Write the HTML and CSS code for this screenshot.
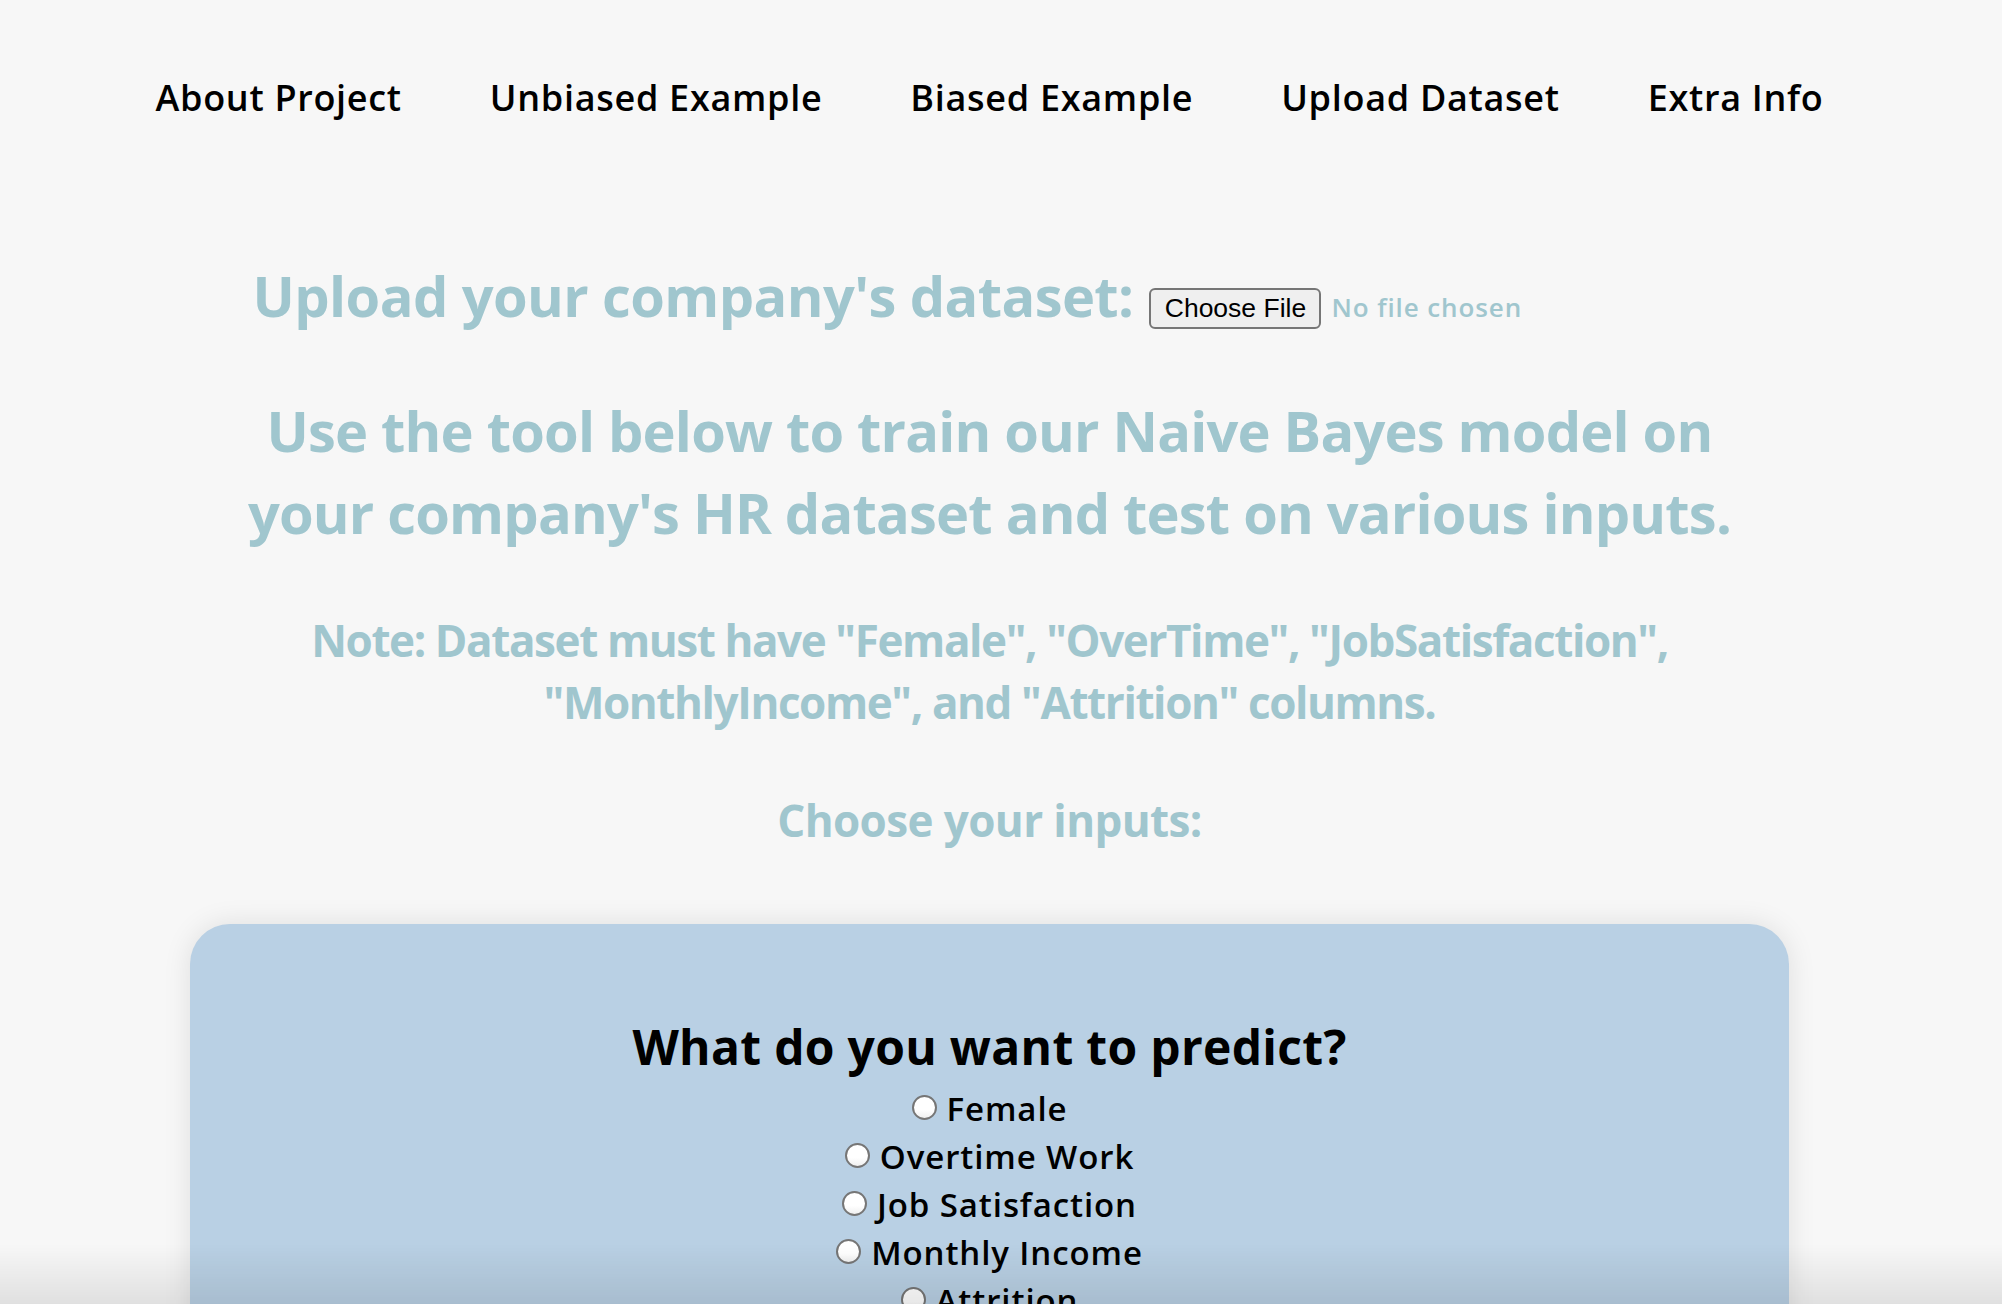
FILE: index.html
```html
<!DOCTYPE html>
<html lang="en">
<head>
<meta charset="utf-8">
<title>Upload Dataset</title>
<link rel="stylesheet" href="styles.css">
</head>
<body>
<div class="page">
  <nav class="nav">
    <a class="nav-link" href="#">About Project</a>
    <a class="nav-link" href="#">Unbiased Example</a>
    <a class="nav-link" href="#">Biased Example</a>
    <a class="nav-link" href="#">Upload Dataset</a>
    <a class="nav-link" href="#">Extra Info</a>
  </nav>

  <div class="upload-row">
    <h1 class="upload-title">Upload your company's dataset:</h1>
    <div class="file-input">
      <button class="file-btn" type="button">Choose File</button>
      <span class="file-name">No file chosen</span>
    </div>
  </div>

  <h2 class="intro">Use the tool below to train our Naive Bayes model on<br>your company's HR dataset and test on various inputs.</h2>

  <h3 class="note">Note: Dataset must have "Female", "OverTime", "JobSatisfaction",<br>"MonthlyIncome", and "Attrition" columns.</h3>

  <h3 class="choose">Choose your inputs:</h3>

  <section class="panel">
    <h2 class="panel-title">What do you want to predict?</h2>
    <div class="options">
      <label class="option"><input class="radio" type="radio" name="target">Female</label>
      <label class="option"><input class="radio" type="radio" name="target">Overtime Work</label>
      <label class="option"><input class="radio" type="radio" name="target">Job Satisfaction</label>
      <label class="option"><input class="radio" type="radio" name="target">Monthly Income</label>
      <label class="option"><input class="radio" type="radio" name="target">Attrition</label>
    </div>
  </section>
</div>
<div class="bottom-fade"></div>
</body>
</html>
```

FILE: styles.css
```css
html, body {
  margin: 0;
  padding: 0;
  background: #f7f7f7;
  height: 100%;
  overflow: hidden;
}

body {
  font-family: "Open Sans", "Noto Sans", sans-serif;
  color: #000;
}

.page {
  padding-right: 23px;
}

.nav {
  display: flex;
  justify-content: center;
  gap: 88px;
  padding-top: 71px;
}

.nav-link {
  font-size: 36px;
  line-height: 54px;
  font-weight: 600;
  letter-spacing: 0.7px;
  color: #000;
  text-decoration: none;
}

.upload-row {
  display: flex;
  justify-content: center;
  align-items: baseline;
  gap: 16px;
  margin-top: 128px;
}

.upload-title {
  margin: 0;
  font-size: 56px;
  line-height: 84px;
  font-weight: 700;
  letter-spacing: -0.6px;
  color: #a0c6ce;
}

.file-input {
  width: 577px;
  display: flex;
  align-items: baseline;
  gap: 10px;
}

.file-btn {
  font-family: "Liberation Sans", Arial, sans-serif;
  font-size: 26.5px;
  height: 41px;
  width: 172px;
  padding: 0;
  border: 2px solid #767676;
  border-radius: 6px;
  background: #efefef;
  color: #000;
}

.file-name {
  font-size: 26px;
  font-weight: 600;
  letter-spacing: 0.9px;
  color: #a0c6ce;
}

.intro {
  margin: 52px 0 0;
  text-align: center;
  font-size: 56px;
  line-height: 82px;
  font-weight: 700;
  letter-spacing: -0.8px;
  color: #a0c6ce;
}

.note {
  margin: 56px 0 0;
  text-align: center;
  font-size: 44px;
  line-height: 62px;
  font-weight: 700;
  letter-spacing: -1.4px;
  color: #a0c6ce;
}

.choose {
  margin: 56px 0 0;
  text-align: center;
  font-size: 44px;
  line-height: 62px;
  font-weight: 700;
  letter-spacing: -0.6px;
  color: #a0c6ce;
}

.panel {
  margin: 73px 0 0 190px;
  width: 1599px;
  background: #b9d0e4;
  border-radius: 40px;
  box-shadow: 0 0 28px rgba(0, 0, 0, 0.1);
  padding-top: 87px;
  padding-bottom: 80px;
}

.panel-title {
  margin: 0;
  text-align: center;
  font-size: 48px;
  line-height: 72px;
  font-weight: 700;
  letter-spacing: 0.3px;
  color: #000;
}

.options {
  margin-top: 2px;
  display: flex;
  flex-direction: column;
  align-items: center;
}

.option {
  display: flex;
  align-items: center;
  font-size: 33px;
  line-height: 48px;
  font-weight: 600;
  letter-spacing: 0.9px;
  color: #000;
}

.radio {
  appearance: none;
  -webkit-appearance: none;
  width: 25px;
  height: 25px;
  margin: 0 10px 4px 0;
  border: 2px solid #767676;
  border-radius: 50%;
  background: linear-gradient(to bottom, #ffffff 60%, #f0f0f0);
  box-sizing: border-box;
}

.bottom-fade {
  position: fixed;
  left: 0;
  right: 0;
  bottom: 0;
  height: 60px;
  background: linear-gradient(to bottom, rgba(0, 0, 0, 0), rgba(0, 0, 0, 0.09));
  pointer-events: none;
}
```
